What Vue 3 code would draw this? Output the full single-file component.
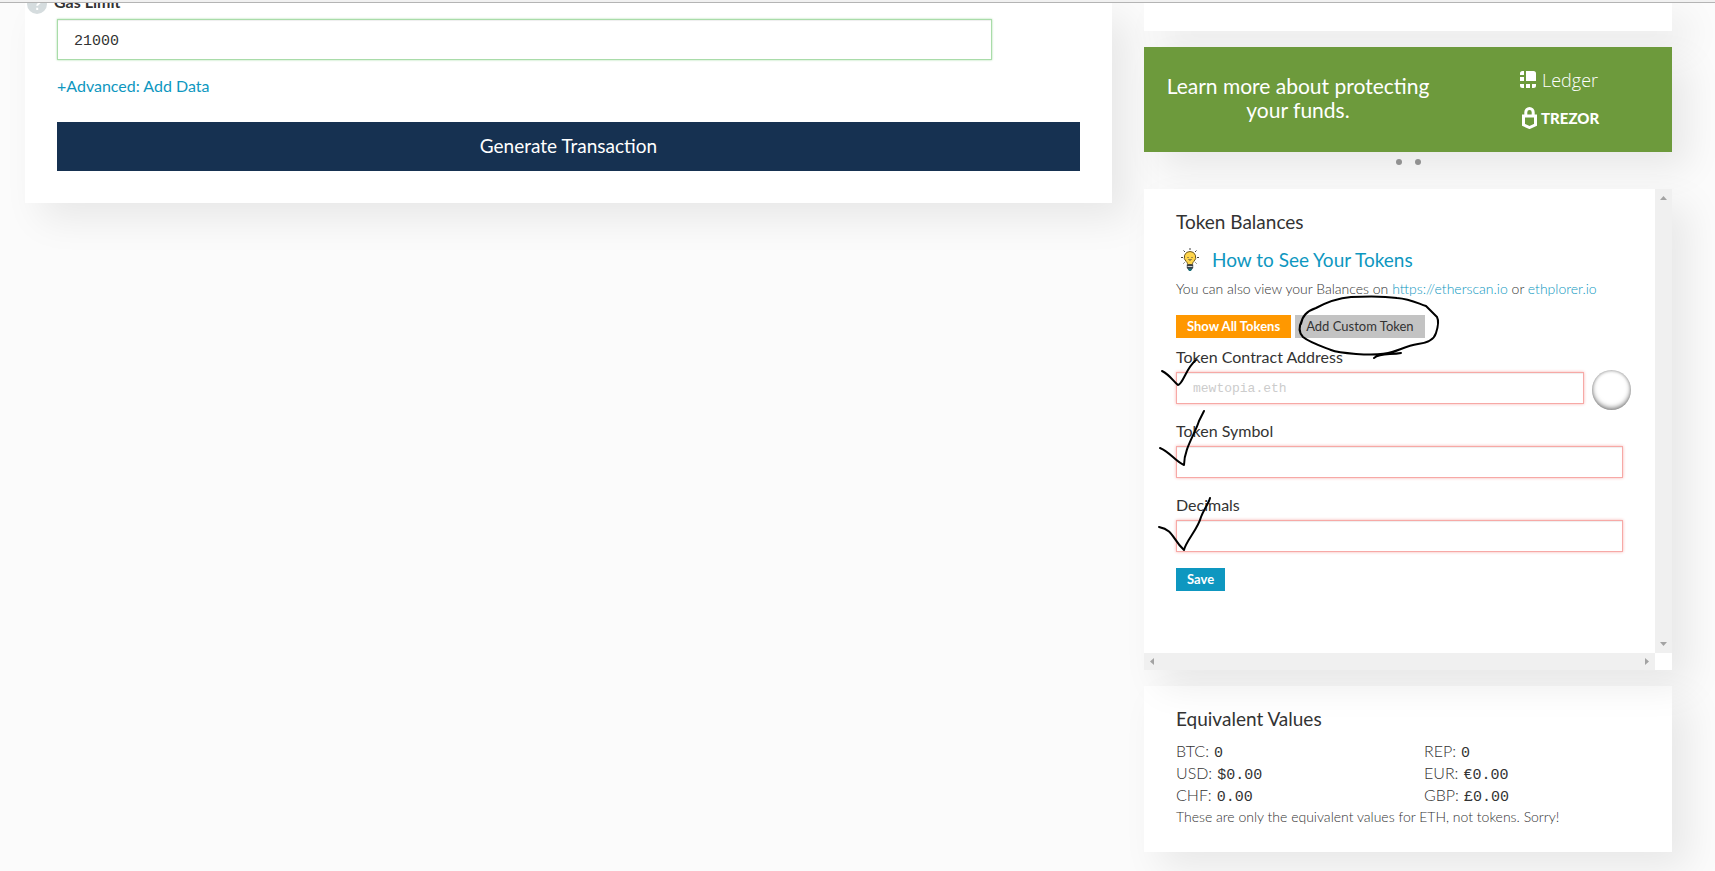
<script setup>
import { ref } from 'vue'

const gasLimit = ref('21000')
const address = ref('')
const symbol = ref('')
const decimals = ref('')

const rates = [
  { code: 'BTC', value: '0' },
  { code: 'REP', value: '0' },
  { code: 'USD', value: '$0.00' },
  { code: 'EUR', value: '€0.00' },
  { code: 'CHF', value: '0.00' },
  { code: 'GBP', value: '£0.00' },
]
</script>

<template>
  <div class="page">
    <div class="topline"></div>
    <div class="columns">
      <main class="card send">
        <div class="gas-label">
          <svg class="help" viewBox="0 0 20 20" aria-hidden="true">
            <circle cx="10" cy="10" r="10" />
            <path d="M7 8c0-4 6.200-4 6.200-.600 0 2-3 2.200-3 4.400M10.200 13.800v2.200" />
          </svg>
          <label for="gas">Gas Limit</label>
        </div>
        <input id="gas" v-model="gasLimit" class="field valid" type="text" />
        <a class="advanced" href="#">+Advanced: Add Data</a>
        <button class="generate" type="button">Generate Transaction</button>
      </main>

      <aside class="side">
        <section class="card history"></section>

        <a class="card banner" href="#">
          <span class="pitch">Learn more about protecting your funds.</span>
          <span class="brands">
            <span class="brand ledger">
              <svg viewBox="0 0 16 17" width="16" height="17" aria-hidden="true">
                <path d="M6 0h7.500a2.500 2.500 0 0 1 2.500 2.500V10H6zM2.500 0H4v4H0V2.500A2.500 2.500 0 0 1 2.500 0zM0 6h4v4H0zM0 13h4v4H2.500A2.500 2.500 0 0 1 0 14.500zM6 13h4v4H6zM12 13h4v1.500a2.500 2.500 0 0 1-2.500 2.500H12z" />
              </svg>
              Ledger
            </span>
            <span class="brand trezor">
              <svg viewBox="0 0 15 22" width="15" height="22" aria-hidden="true">
                <path class="outline" d="M3.800 9V5.200a3.700 3.700 0 0 1 7.400 0V9M1.500 9h12v8.800l-6 2.700-6-2.700z" />
              </svg>
              TREZOR
            </span>
          </span>
        </a>

        <div class="dots"><i></i><i></i></div>

        <section class="card tokens">
          <div class="token-body">
            <h2>Token Balances</h2>
            <a class="howto" href="#">
              <svg viewBox="0 0 20 24" width="20" height="24" aria-hidden="true">
                <path class="ray" d="M10 0v2M3.500 2.500L5 4M16.500 2.500L15 4M1 9.500h2M17 9.500h2M3.500 15.500l1-1M16.500 15.500l-1-1" />
                <path class="glass" d="M10 3.500a5.700 5.700 0 0 0-3.800 10c1 .900 1.300 1.800 1.300 3h5c0-1.200.300-2.100 1.300-3a5.700 5.700 0 0 0-3.800-10z" />
                <path class="ray" d="M8 9v1M12 9v1M8.500 11.500q1.500 1.200 3 0" />
                <path class="base" d="M6.800 16.500h6.400v3.500L11 22.500H9L6.800 20z" />
                <path class="ring" d="M7.500 18.500h5" />
                <path class="tip" d="M8 20.500h4l-1 2.500H9z" />
              </svg>
              How to See Your Tokens
            </a>
            <p class="hint">You can also view your Balances on <a href="#">https://etherscan.io</a> or <a href="#">ethplorer.io</a></p>
            <div class="actions">
              <button class="small orange" type="button">Show All Tokens</button>
              <button class="small grey" type="button">Add Custom Token</button>
            </div>
            <label for="address">Token Contract Address</label>
            <div class="address-row">
              <input id="address" v-model="address" class="field invalid" type="text" placeholder="mewtopia.eth" />
              <span class="identicon"></span>
            </div>
            <label for="symbol">Token Symbol</label>
            <input id="symbol" v-model="symbol" class="field invalid" type="text" />
            <label for="decimals">Decimals</label>
            <input id="decimals" v-model="decimals" class="field invalid" type="text" />
            <button class="small blue" type="button">Save</button>
          </div>
          <div class="bar vertical">
            <svg viewBox="0 0 7 4" width="7" height="4"><path d="M0 4L3.500 0 7 4z" /></svg>
            <svg viewBox="0 0 7 4" width="7" height="4"><path d="M0 0L3.500 4 7 0z" /></svg>
          </div>
          <div class="bar horizontal">
            <svg viewBox="0 0 4 7" width="4" height="7"><path d="M4 0L0 3.500 4 7z" /></svg>
            <svg viewBox="0 0 4 7" width="4" height="7"><path d="M0 0L4 3.500 0 7z" /></svg>
          </div>
          <!-- pen marks over the form -->
          <svg class="ink" viewBox="0 0 300 380" width="300" height="380" aria-hidden="true">
            <path d="M157 135C158 127 163 122 172 119C183 113 196 109 207 108C225 107 240 107 253 109C266 110 273 114 282 117L293 128C295 132 294 138 292 144C290 151 282 154 274 155C262 157 256 161 248 163C240 166 228 166 212 165C200 164 192 163 187 161C174 156 165 153 159 148C154 143 155 137 158 131M230 169C236 164 246 166 257 164" />
            <path d="M18 182C26 186 29 192 34 196C39 195 42 179 52 171" />
            <path d="M16 259C26 263 32 273 40 276C40 260 51 245 55 232L60 222" />
            <path d="M15 338C30 341 28 350 40 361C42 352 54 340 57 328C60 320 65 314 66 309" />
          </svg>
        </section>

        <section class="card values">
          <h2>Equivalent Values</h2>
          <dl>
            <div v-for="rate in rates" :key="rate.code">
              <dt>{{ rate.code }}:</dt>
              <dd>{{ rate.value }}</dd>
            </div>
          </dl>
          <p>These are only the equivalent values for ETH, not tokens. Sorry!</p>
        </section>
      </aside>
    </div>
  </div>
</template>

<style>
body {
  margin: 0;
  background: #fbfbfb;
}
</style>

<style scoped>
.page {
  height: 100vh;
  overflow: hidden;
  color: #333;
  font: 16px/22px Lato, "Open Sans", sans-serif;
}
.page *,
.page *::before {
  box-sizing: border-box;
}
.topline {
  position: relative;
  z-index: 2;
  height: 3px;
  background: #f1f1f1;
  border-bottom: 1px solid #b4b4b4;
}
.columns {
  display: grid;
  grid-template-columns: 1087fr 528fr;
  gap: 32px;
  align-items: start;
  padding: 0 43px 0 25px;
}
.card {
  background: #fff;
  box-shadow: 16px 16px 36px rgba(0, 0, 0, 0.08);
}
a {
  color: #0e97c0;
  text-decoration: none;
}
button {
  border: 0;
  font-family: inherit;
}
h2 {
  margin: 0;
  font-size: 19px;
  font-weight: 400;
  line-height: 24px;
}

.send {
  display: flex;
  flex-direction: column;
  padding: 0 32px 32px;
}
.gas-label {
  display: flex;
  align-items: center;
  gap: 7px;
  height: 20px;
  margin: -9px 0 5px -30px;
  font-weight: 700;
}
.gas-label label {
  padding-bottom: 4px;
}
.help {
  width: 20px;
  height: 20px;
  fill: #d5dcde;
}
.help path {
  fill: none;
  stroke: #fff;
  stroke-width: 2;
}
.field {
  width: 100%;
  padding: 0 16px;
  border: 1px solid;
  background: #fff;
  color: #333;
  font-family: "Liberation Mono", monospace;
}
.field::placeholder {
  color: #ccc;
  opacity: 1;
}
.valid {
  width: auto;
  height: 41px;
  margin-right: 88px;
  padding-top: 3px;
  border-color: #a9dca9;
  box-shadow: inset 0 1px 1px rgba(0, 0, 0, 0.07), 0 0 2px #a9dca9;
  font-size: 15px;
}
.advanced {
  align-self: start;
  margin: 15px 0 25px;
}
.generate {
  height: 49px;
  padding-bottom: 4px;
  background: #163151;
  color: #fff;
  font-size: 19px;
}

.side {
  display: flex;
  flex-direction: column;
  min-width: 0;
}
.history {
  height: 28px;
  margin-bottom: 16px;
}
.banner {
  display: grid;
  grid-template-columns: 7fr 5fr;
  align-items: center;
  height: 105px;
  background: #6d9a3c;
  color: #fff;
}
.pitch {
  padding: 0 16px 4px;
  font-size: 21px;
  line-height: 24px;
  text-align: center;
}
.brands {
  display: flex;
  flex-direction: column;
  gap: 16px;
  width: 84px;
  margin: 0 auto;
  padding-bottom: 2px;
}
.brand {
  display: flex;
  align-items: center;
  height: 22px;
  fill: #fff;
}
.ledger {
  gap: 6px;
  font: 300 18px/22px "Open Sans", sans-serif;
}
.trezor {
  gap: 4px;
  padding-left: 2px;
  font-size: 15px;
  font-weight: 900;
}
.outline {
  fill: none;
  stroke: #fff;
  stroke-width: 3;
}
.dots {
  display: flex;
  justify-content: center;
  gap: 13px;
  height: 37px;
  padding-top: 7px;
}
.dots i {
  width: 6px;
  height: 6px;
  border-radius: 50%;
  background: #919191;
}

.tokens {
  position: relative;
  display: grid;
  grid-template-columns: 1fr 17px;
  grid-template-rows: 1fr 17px;
}
.token-body {
  min-width: 0;
  padding: 21px 32px 62px;
}
.howto {
  display: flex;
  align-items: center;
  gap: 12px;
  margin-top: 14px;
  padding-left: 4px;
  font-size: 19px;
  line-height: 24px;
}
.ray {
  fill: none;
  stroke: #444;
}
.glass {
  fill: #ffd54c;
  stroke: #6a5520;
}
.base {
  fill: #3b4146;
}
.ring {
  stroke: #cfd3d6;
}
.tip {
  fill: #16707a;
}
.hint {
  margin: 6px 0 15px;
  font-size: 14px;
  font-weight: 300;
  line-height: 22px;
}
.actions {
  display: flex;
  gap: 4px;
  margin-bottom: 8px;
}
.small {
  height: 23px;
  padding: 0 11px 1px;
  color: #fff;
  font-size: 13px;
  font-weight: 700;
}
.orange {
  background: #ff9800;
}
.grey {
  background: #c3c3c3;
  color: #333;
  font-weight: 400;
}
.blue {
  display: block;
  background: #0e97c0;
}
.token-body label {
  display: block;
  margin-bottom: 4px;
}
.token-body .field {
  display: block;
  height: 32px;
  margin-bottom: 16px;
  font-size: 13px;
}
.invalid {
  border-color: #f7a9a6;
  box-shadow: inset 0 1px 1px rgba(0, 0, 0, 0.07), 0 0 3px #f7b4b1;
}
.address-row {
  display: flex;
  gap: 8px;
  margin-right: -8px;
}
.identicon {
  flex: none;
  width: 39px;
  height: 40px;
  margin: -2px 0 0;
  border-radius: 50%;
  box-shadow: inset 0 -2px 5px rgba(0, 0, 0, 0.5), inset 0 1px 3px rgba(0, 0, 0, 0.2);
}
.bar {
  display: flex;
  align-items: center;
  justify-content: space-between;
  background: #f0f0f0;
  fill: #a3a3a3;
}
.vertical {
  flex-direction: column;
  padding: 7px 0;
}
.horizontal {
  padding: 0 6px;
}
.ink {
  position: absolute;
  top: 0;
  left: 0;
  fill: none;
  stroke: #000;
  stroke-width: 2;
  stroke-linecap: round;
  stroke-linejoin: round;
}

.values {
  margin-top: 16px;
  padding: 21px 32px 24px;
}
dl {
  display: grid;
  grid-template-columns: 248fr 216fr;
  grid-auto-rows: 22px;
  margin: 9px 0 0;
}
dl div {
  display: flex;
  align-items: baseline;
  gap: 5px;
}
dt {
  font-weight: 300;
}
dd {
  margin: 0;
  font-family: "Liberation Mono", monospace;
  font-size: 15px;
}
.values p {
  margin: 0;
  font-size: 14px;
  font-weight: 300;
}
</style>
